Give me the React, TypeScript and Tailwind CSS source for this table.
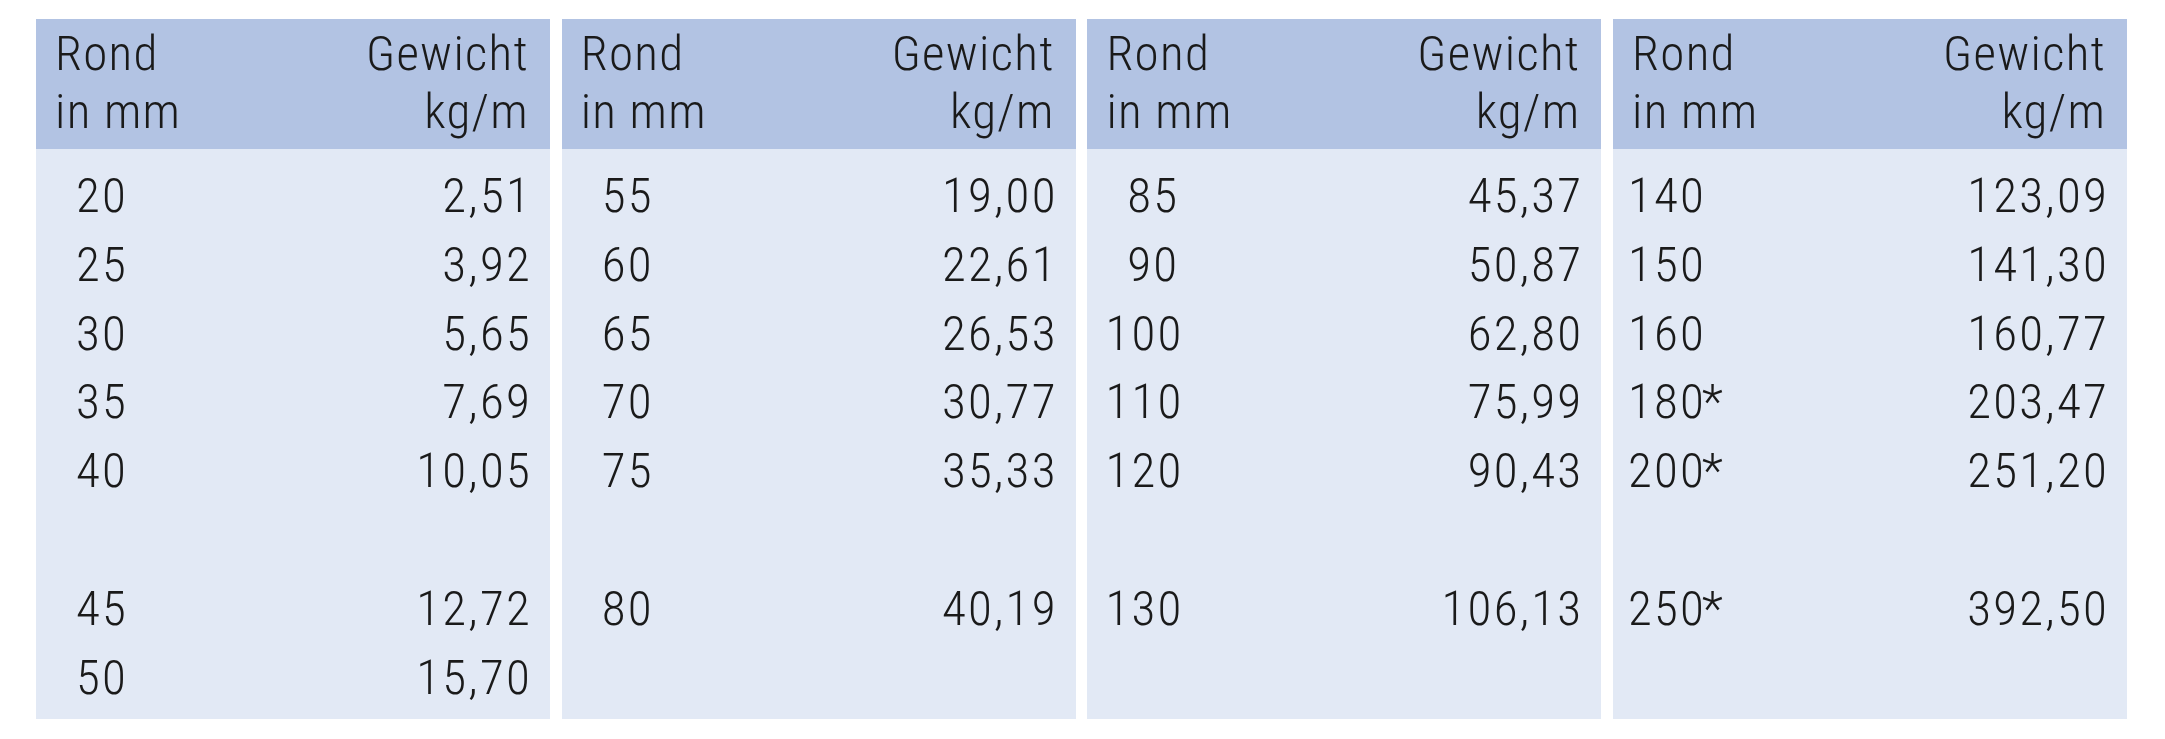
import React from "react";

type Row = [string, string, string] | null; // [number, star, weight]

const panels: { rows: Row[]; pl: string }[] = [
  {
    pl: "pl-[18px]",
    rows: [
      ["20", "", "2,51"],
      ["25", "", "3,92"],
      ["30", "", "5,65"],
      ["35", "", "7,69"],
      ["40", "", "10,05"],
      null,
      ["45", "", "12,72"],
      ["50", "", "15,70"],
    ],
  },
  {
    pl: "pl-[18px]",
    rows: [
      ["55", "", "19,00"],
      ["60", "", "22,61"],
      ["65", "", "26,53"],
      ["70", "", "30,77"],
      ["75", "", "35,33"],
      null,
      ["80", "", "40,19"],
    ],
  },
  {
    pl: "pl-[18px]",
    rows: [
      ["85", "", "45,37"],
      ["90", "", "50,87"],
      ["100", "", "62,80"],
      ["110", "", "75,99"],
      ["120", "", "90,43"],
      null,
      ["130", "", "106,13"],
    ],
  },
  {
    pl: "pl-[15px]",
    rows: [
      ["140", "", "123,09"],
      ["150", "", "141,30"],
      ["160", "", "160,77"],
      ["180", "*", "203,47"],
      ["200", "*", "251,20"],
      null,
      ["250", "*", "392,50"],
    ],
  },
];

function Panel({ rows, pl }: { rows: Row[]; pl: string }) {
  return (
    <div className="flex w-[514px] flex-col">
      <div className="flex h-[130px] justify-between bg-[#b2c3e3] pl-[19px] pr-[21px] pt-[6px] leading-[58px] tracking-[1.3px]">
        <div>
          <div>Rond</div>
          <div>in mm</div>
        </div>
        <div className="text-right">
          <div>Gewicht</div>
          <div>kg/m</div>
        </div>
      </div>
      <div className="h-[570px] bg-[#e2e9f5] pt-[13px] leading-[68.8px] tracking-[2.2px]">
        {rows.map((r, i) =>
          r ? (
            <div key={i} className={`flex justify-between ${pl} pr-[18px]`}>
              <div>
                <span className="inline-block w-[74px] text-right">{r[0]}</span>
                {r[1]}
              </div>
              <div>{r[2]}</div>
            </div>
          ) : (
            <div key={i} className="h-[68.8px]" />
          )
        )}
      </div>
    </div>
  );
}

export default function App() {
  return (
    <div className="h-[739px] w-[2165px] bg-white pl-[36px] pt-[19px] font-['Roboto_Condensed','Roboto',sans-serif] text-[49px] font-light text-[#1a1a1a]">
      <div className="flex gap-[11.7px]">
        {panels.map((p, i) => (
          <Panel key={i} rows={p.rows} pl={p.pl} />
        ))}
      </div>
    </div>
  );
}
